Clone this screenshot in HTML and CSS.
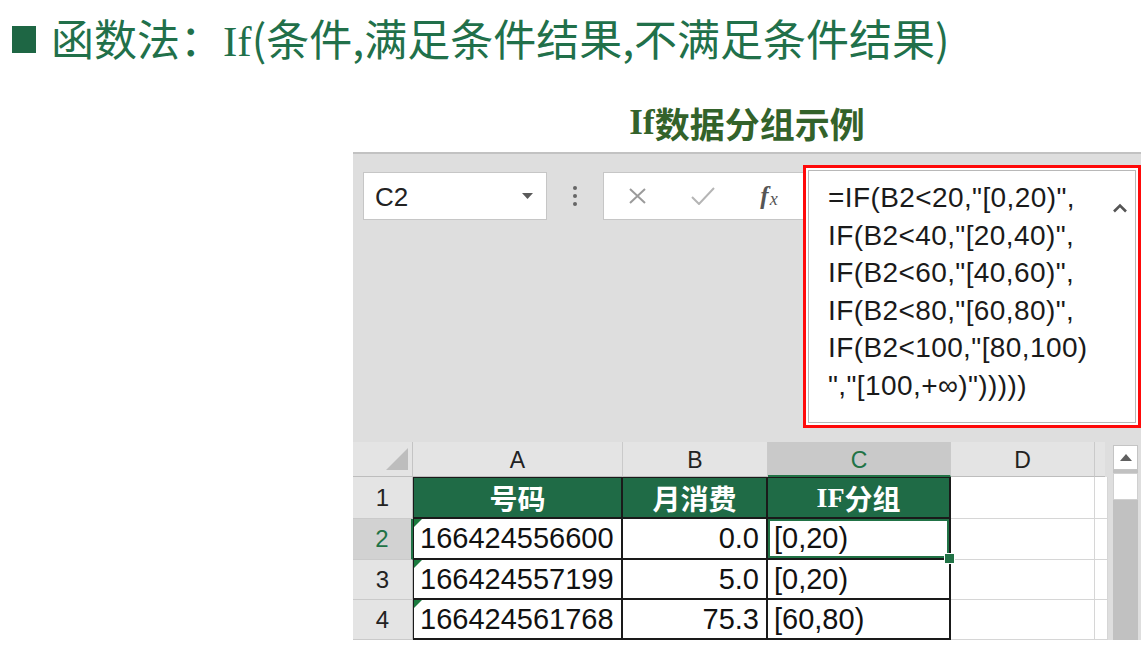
FILE: index.html
```html
<!DOCTYPE html>
<html lang="zh-CN">
<head>
<meta charset="utf-8">
<title>If数据分组示例</title>
<link rel="stylesheet" href="styles.css">
</head>
<body>
<div class="page">
  <header class="title">
    <span class="bullet"></span>
    <h1 class="title-text">函数法：<span class="serif">If</span>(条件,满足条件结果,不满足条件结果)</h1>
  </header>
  <section class="panel">
    <h2 class="subtitle"><span class="serif">If</span>数据分组示例</h2>
    <div class="excel">
      <div class="fbar">
        <div class="namebox">
          <span class="ref">C2</span>
          <svg class="dd" width="11" height="6" viewBox="0 0 11 6"><polygon points="0,0 11,0 5.5,6" fill="#5a5a5a"/></svg>
        </div>
        <div class="dots"><i></i><i></i><i></i></div>
        <div class="fbox">
          <span class="slot"><svg width="17" height="16" viewBox="0 0 17 16"><path d="M1 1 L16 15 M16 1 L1 15" stroke="#9b9b9b" stroke-width="2" fill="none"/></svg></span>
          <span class="slot"><svg width="24" height="18" viewBox="0 0 24 18"><path d="M1 10 L8 17 L23 1" stroke="#b5b5b5" stroke-width="2" fill="none"/></svg></span>
          <span class="slot fx"><span class="fx-f">f</span><span class="fx-x">x</span></span>
        </div>
        <div class="formula">
          <div class="flines">
            <div class="fl">=IF(B2&lt;20,"[0,20)",</div>
            <div class="fl">IF(B2&lt;40,"[20,40)",</div>
            <div class="fl">IF(B2&lt;60,"[40,60)",</div>
            <div class="fl">IF(B2&lt;80,"[60,80)",</div>
            <div class="fl">IF(B2&lt;100,"[80,100)</div>
            <div class="fl">","[100,+∞)")))))</div>
          </div>
          <svg class="chev" width="16" height="10" viewBox="0 0 16 10"><path d="M2 8.5 L8 2.5 L14 8.5" stroke="#555" stroke-width="2.6" fill="none"/></svg>
        </div>
      </div>
      <div class="sheet">
        <div class="grid">
          <div class="corner"><svg width="60" height="35" viewBox="0 0 60 35"><polygon points="55,6 55,28 33,28" fill="#bdbdbd"/></svg></div>
          <div class="ch">A</div>
          <div class="ch">B</div>
          <div class="ch sel">C</div>
          <div class="ch">D</div>
          <div class="ch e"></div>

          <div class="rh">1</div>
          <div class="c t hd first">号码</div>
          <div class="c t hd">月消费</div>
          <div class="c t hd"><span class="serif">IF</span>分组</div>
          <div class="c"></div>
          <div class="c"></div>

          <div class="rh sel">2</div>
          <div class="c t first flag">166424556600</div>
          <div class="c t num">0.0</div>
          <div class="c t selcell">[0,20)</div>
          <div class="c"></div>
          <div class="c"></div>

          <div class="rh">3</div>
          <div class="c t first flag">166424557199</div>
          <div class="c t num">5.0</div>
          <div class="c t">[0,20)</div>
          <div class="c"></div>
          <div class="c"></div>

          <div class="rh">4</div>
          <div class="c t first flag">166424561768</div>
          <div class="c t num">75.3</div>
          <div class="c t">[60,80)</div>
          <div class="c"></div>
          <div class="c"></div>
        </div>
        <div class="vscroll">
          <div class="sb-btn"><svg width="12" height="7" viewBox="0 0 12 7"><polygon points="0,7 12,7 6,0" fill="#606060"/></svg></div>
          <div class="sb-thumb"></div>
        </div>
      </div>
    </div>
  </section>
</div>
</body>
</html>
```

FILE: styles.css
```css
* { box-sizing: border-box; }
html, body { margin: 0; padding: 0; background: #fff; }
body {
  width: 1145px;
  height: 647px;
  overflow: hidden;
  font-family: "Liberation Sans", "Noto Sans CJK SC", sans-serif;
  color: #1a1a1a;
}
.serif { font-family: "Liberation Serif", "Noto Sans CJK SC", serif; }

/* Title */
.title {
  display: flex;
  align-items: center;
  height: 78px;
  padding-left: 12px;
}
.bullet {
  flex: none;
  width: 24px;
  height: 27px;
  background: #1e6644;
  margin-right: 15px;
}
.title-text {
  margin: 0;
  font: 400 43px/1 "Noto Sans CJK SC", sans-serif;
  color: #21704a;
  white-space: nowrap;
}
.title-text .serif { font-family: "Liberation Serif", serif; }

/* Panel */
.panel { margin-left: 353px; width: 788px; }
.subtitle {
  margin: 0;
  height: 74px;
  padding-top: 15px;
  display: flex;
  align-items: center;
  justify-content: center;
  font: 700 35px/1 "Noto Sans CJK SC", sans-serif;
  color: #33622a;
}
.subtitle .serif { font-family: "Liberation Serif", serif; font-weight: 700; }

.excel {
  height: 488px;
  background: #dedede;
  border-top: 2px solid #c2c2c2;
  display: flex;
  flex-direction: column;
}

/* Formula bar */
.fbar {
  height: 288px;
  display: flex;
  align-items: flex-start;
  padding: 11px 0 0 10px;
}
.namebox {
  margin-top: 7px;
  width: 184px;
  height: 48px;
  background: #fff;
  border: 1px solid #c6c6c6;
  display: flex;
  align-items: center;
  justify-content: space-between;
  padding: 0 13px 0 11px;
}
.ref { font-size: 26px; color: #222; padding-top: 3px; }
.dd { margin-top: -1px; }
.dots {
  margin-top: 7px;
  width: 56px;
  height: 48px;
  display: flex;
  flex-direction: column;
  align-items: center;
  justify-content: center;
  gap: 4px;
}
.dots i { display: block; width: 4px; height: 4px; border-radius: 50%; background: #666; }
.fbox {
  margin-top: 7px;
  width: 200px;
  height: 48px;
  background: #fff;
  border: 1px solid #c6c6c6;
  border-right: none;
  display: flex;
  align-items: center;
}
.slot { width: 66px; display: flex; justify-content: center; align-items: center; }
.fx { font-family: "Liberation Serif", serif; font-style: italic; color: #555; }
.fx-f { font-size: 25px; font-weight: 700; }
.fx-x { font-size: 18px; margin-left: 1px; margin-top: 6px; }

.formula {
  width: 338px;
  height: 263px;
  background: #fff;
  border: 3px solid #ff0a0a;
  box-shadow: inset 0 0 0 2px #fff, inset 0 0 0 3px #b8b8b8;
  display: flex;
  align-items: flex-start;
  padding: 11px 0 0 22px;
}
.flines { flex: 1; }
.fl {
  font-size: 28px;
  line-height: 37.5px;
  letter-spacing: 0.4px;
  color: #1a1a1a;
  white-space: nowrap;
}
.chev { margin: 24px 10px 0 0; flex: none; }

/* Sheet */
.sheet { height: 198px; display: flex; align-items: flex-start; }
.grid {
  display: grid;
  grid-template-columns: 60px 210px 145px 183px 144px 10px;
  grid-template-rows: 35px 42px 41px 40px 40px;
}
.corner {
  background: #e4e4e4;
  border-right: 1px solid #c4c4c4;
  border-bottom: 1px solid #bdbdbd;
}
.corner svg { display: block; }
.ch {
  background: #e4e4e4;
  border-right: 1px solid #cacaca;
  border-bottom: 1px solid #bdbdbd;
  display: flex;
  align-items: center;
  justify-content: center;
  padding-top: 3px;
  font-size: 23px;
  color: #222;
}
.ch.sel {
  background: #c9c9c9;
  color: #217346;
  border-bottom: 2px solid #217346;
}
.ch.e { border-right: none; }
.rh {
  background: #e4e4e4;
  border-right: 1px solid #bdbdbd;
  border-bottom: 1px solid #cacaca;
  display: flex;
  align-items: center;
  justify-content: center;
  font-size: 24px;
  color: #222;
}
.rh.sel {
  background: #d2d2d2;
  color: #217346;
  border-right: 2px solid #217346;
}
.c {
  position: relative;
  background: #fff;
  border-right: 1px solid #d6d6d6;
  border-bottom: 1px solid #d6d6d6;
  display: flex;
  align-items: center;
  padding: 0 6px;
  font-size: 29px;
  color: #111;
  white-space: nowrap;
}
.c.t {
  border-right: 2px solid #1a1a1a;
  border-bottom: 2px solid #1a1a1a;
}
.c.t.first { border-left: 1px solid #1a1a1a; }
.c.hd {
  background: #1f6b46;
  color: #fff;
  justify-content: center;
  font: 700 28px/1 "Noto Sans CJK SC", sans-serif;
  border-top: 1px solid #1a1a1a;
}
.c.hd .serif { font-family: "Liberation Serif", serif; font-weight: 700; }
.c.num { justify-content: flex-end; padding-right: 7px; }
.flag::before {
  content: "";
  position: absolute;
  left: 0;
  top: 0;
  border-top: 8px solid #1b7a3e;
  border-right: 8px solid transparent;
}
.selcell {
  z-index: 2;
  box-shadow: inset 0 0 0 2px #217346;
}
.selcell::after {
  content: "";
  position: absolute;
  right: -6px;
  bottom: -6px;
  width: 9px;
  height: 9px;
  background: #217346;
  border: 1px solid #fff;
}

/* Vertical scrollbar */
.vscroll {
  width: 25px;
  height: 195px;
  margin: 3px 0 0 8px;
  background: #c1c1c1;
  display: flex;
  flex-direction: column;
}
.sb-btn {
  height: 25px;
  background: #fff;
  border: 1px solid #c4c4c4;
  display: flex;
  align-items: center;
  justify-content: center;
}
.sb-thumb {
  height: 27px;
  margin-top: 3px;
  background: #fff;
  border: 1px solid #d0d0d0;
}
```
